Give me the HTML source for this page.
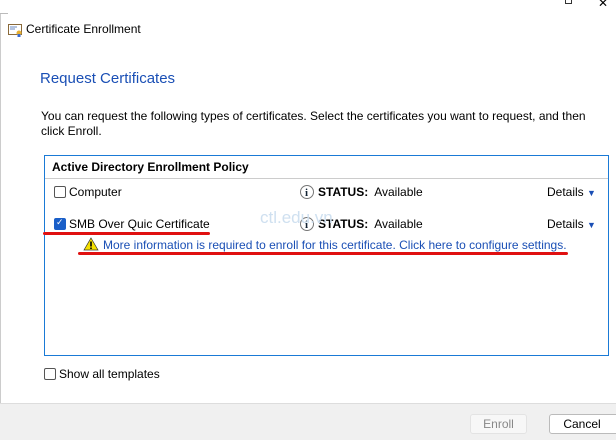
<!DOCTYPE html>
<html><head><style>
*{margin:0;padding:0;box-sizing:border-box}
body{width:616px;height:440px;background:#fff;font-family:"Liberation Sans",sans-serif;font-size:12px;color:#000;position:relative;overflow:hidden}
.a{position:absolute;white-space:nowrap}
.cb{position:absolute;width:12px;height:12px;border:1px solid #555;border-radius:2px;background:#fff}
</style></head><body>
<div class="a" style="left:0;top:13px;width:2px;height:390px;border-left:1px solid #ccc"></div>
<div class="a" style="left:0;top:13px;width:8px;border-top:1px solid #bbb"></div>
<div class="a" style="left:565px;top:0;width:7px;height:4px;border:1px solid #333;border-top:none"></div>
<div class="a" style="left:598px;top:-4px;font-size:12px">✕</div>
<svg class="a" style="left:8px;top:23px" width="14" height="14" viewBox="0 0 14 14"><rect x="0.5" y="1.5" width="13" height="10" fill="#fff" stroke="#8a6a3a"/><line x1="2" y1="4" x2="9" y2="4" stroke="#6a8ac0"/><line x1="2" y1="6" x2="7" y2="6" stroke="#6a8ac0"/><circle cx="11" cy="10" r="2.5" fill="#e8b030"/><rect x="9.5" y="11" width="3" height="3" fill="#3a6ad0"/></svg>
<div class="a" style="left:26px;top:22px;font-size:12px">Certificate Enrollment</div>
<div class="a" style="left:40px;top:70px;font-size:15px;color:#1a4fb5">Request Certificates</div>
<div class="a" style="left:41px;top:109px;line-height:15px">You can request the following types of certificates. Select the certificates you want to request, and then<br>click Enroll.</div>
<div class="a" style="left:44px;top:155px;width:565px;height:201px;border:1px solid #1a7ad6"></div>
<div class="a" style="left:45px;top:178px;width:563px;border-top:1px solid #ccc"></div>
<div class="a" style="left:52px;top:160px;font-weight:bold">Active Directory Enrollment Policy</div>
<div class="cb" style="left:54px;top:186px"></div>
<div class="a" style="left:69px;top:185px">Computer</div>
<div class="cb" style="left:54px;top:218px;background:#1a5fc8;border-color:#1a5fc8"><span style="position:absolute;left:1px;top:-2px;color:#fff;font-size:9px">✓</span></div>
<div class="a" style="left:69px;top:217px">SMB Over Quic Certificate</div>
<svg class="a" style="left:299px;top:184px" width="16" height="16"><circle cx="8" cy="8" r="6.5" fill="#fff" stroke="#777"/><text x="6" y="12" font-size="11" font-weight="bold" fill="#123" font-family="Liberation Serif">i</text></svg>
<svg class="a" style="left:299px;top:216px" width="16" height="16"><circle cx="8" cy="8" r="6.5" fill="#fff" stroke="#777"/><text x="6" y="12" font-size="11" font-weight="bold" fill="#123" font-family="Liberation Serif">i</text></svg>
<div class="a" style="left:318px;top:185px"><b>STATUS:</b>&nbsp; Available</div>
<div class="a" style="left:318px;top:217px"><b>STATUS:</b>&nbsp; Available</div>
<div class="a" style="left:547px;top:185px">Details <span style="color:#1a4fb5;font-size:9px">▼</span></div>
<div class="a" style="left:547px;top:217px">Details <span style="color:#1a4fb5;font-size:9px">▼</span></div>
<div class="a" style="left:260px;top:208px;font-size:17px;color:#cfe0f0">ctl.edu.vn</div>
<svg class="a" style="left:83px;top:237px" width="16" height="14"><polygon points="8,1 15,13 1,13" fill="#f5e000" stroke="#333" stroke-width="0.7"/><rect x="7.2" y="4.5" width="1.6" height="5" fill="#000"/><rect x="7.2" y="10.5" width="1.6" height="1.5" fill="#000"/></svg>
<div class="a" style="left:103px;top:238px;color:#1a4fb5">More information is required to enroll for this certificate. Click here to configure settings.</div>
<div class="a" style="left:43px;top:232px;width:167px;height:3px;background:#e01010;border-radius:2px"></div>
<div class="a" style="left:78px;top:252px;width:490px;height:3px;background:#e01010;border-radius:2px"></div>
<div class="cb" style="left:44px;top:368px"></div>
<div class="a" style="left:59px;top:367px">Show all templates</div>
<div class="a" style="left:0;top:403px;width:616px;height:37px;background:#f0f0f0;border-top:1px solid #ddd"></div>
<div class="a" style="left:470px;top:414px;width:57px;height:20px;border:1px solid #e3e3e3;background:#f7f7f7;border-radius:3px;color:#888;text-align:center;line-height:18px">Enroll</div>
<div class="a" style="left:549px;top:414px;width:70px;height:20px;border:1px solid #bbb;background:#fff;border-radius:3px;text-align:center;line-height:18px;padding-right:4px">Cancel</div>
</body></html>
